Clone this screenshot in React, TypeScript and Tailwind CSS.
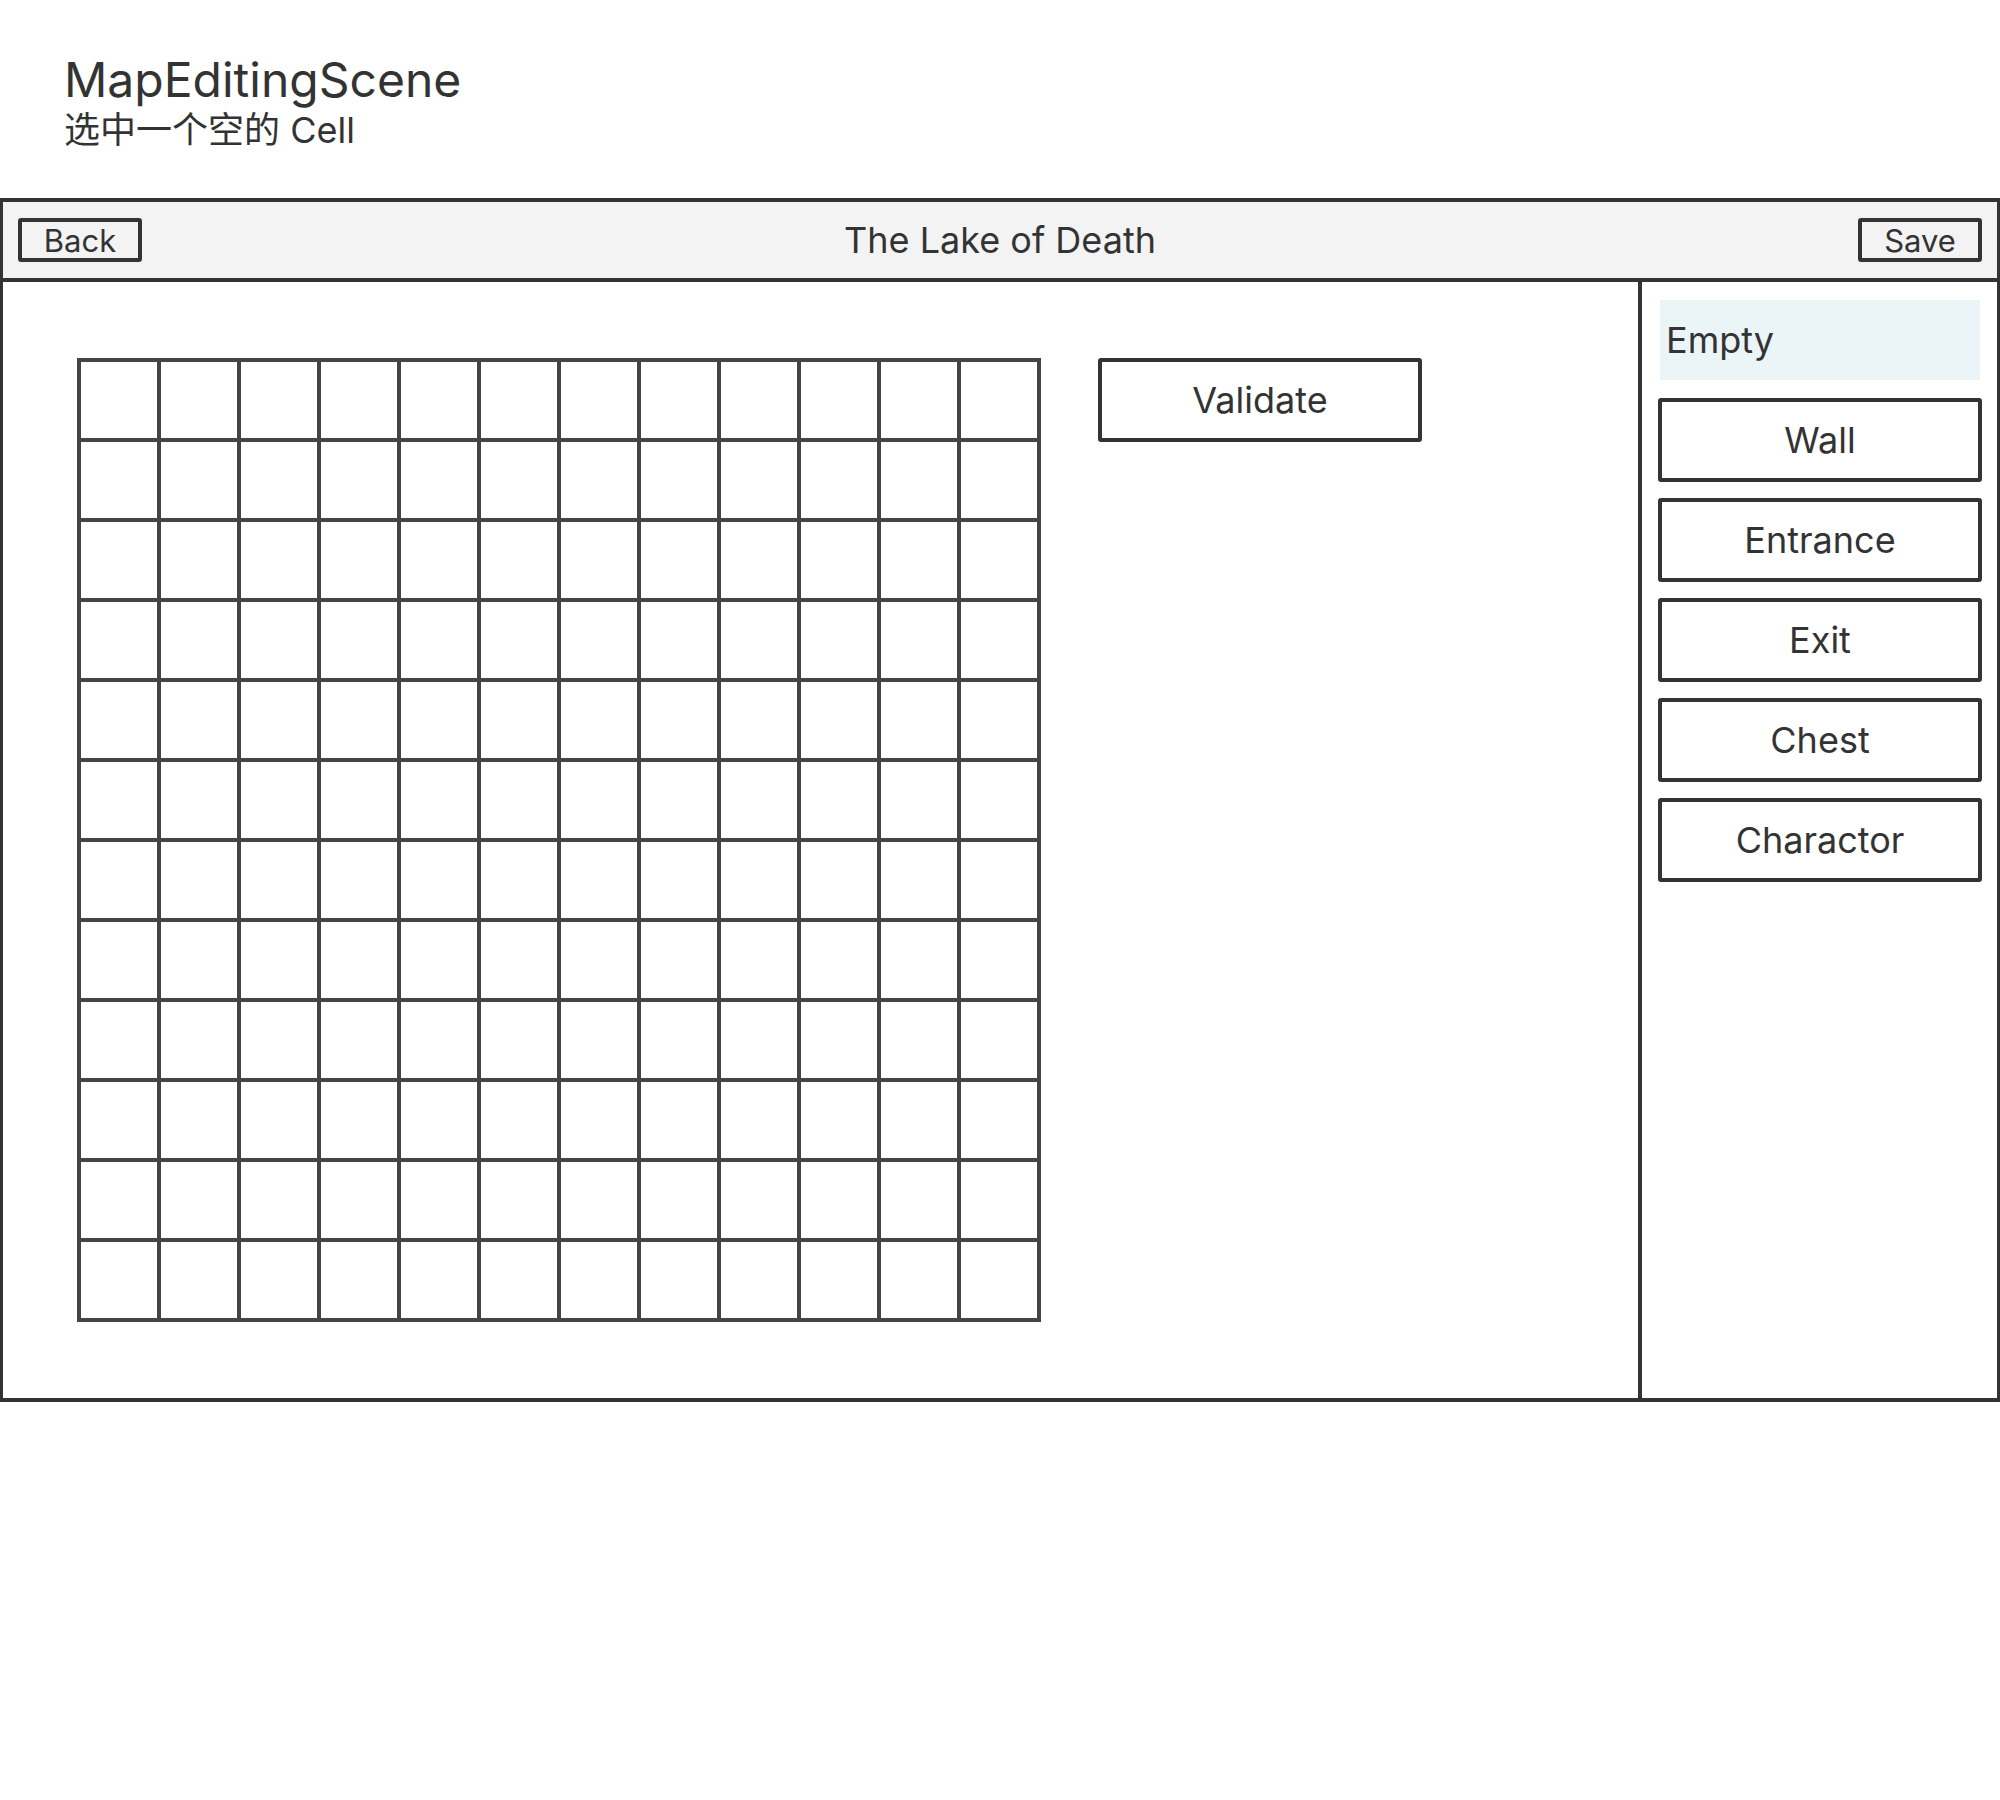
const cellTypes = ['Wall', 'Entrance', 'Exit', 'Chest', 'Charactor']

const gridCells = Array.from({ length: 144 }, (_, i) => i)

const App = () => {
  return (
    <div
      className="h-[1800px] w-[2000px] bg-white text-[#333]"
      style={ { fontFamily: 'Inter, "Noto Sans CJK SC", sans-serif' } }
    >
      <div className="h-[198px] pl-[64px] pt-[52px]">
        <h1 className="text-[48px] leading-[56px] font-normal">MapEditingScene</h1>
        <p className="text-[36px] leading-[44px]">选中一个空的 Cell</p>
      </div>

      <div className="border-x-[3px] border-y-4 border-[#333]">
        <div className="flex h-[80px] items-center justify-between border-b-4 border-[#333] bg-[#f3f3f3] px-[15px]">
          <button className="h-[44px] w-[124px] rounded-[3px] border-4 border-[#333] text-[31px] leading-none">
            Back
          </button>
          <div className="text-[36px] leading-none">The Lake of Death</div>
          <button className="h-[44px] w-[124px] rounded-[3px] border-4 border-[#333] text-[31px] leading-none">
            Save
          </button>
        </div>

        <div className="flex h-[1116px]">
          <div className="flex flex-1 items-start pl-[74px] pt-[76px]">
            <div className="grid grid-cols-[repeat(12,76px)] gap-[4px] bg-[#444] p-[4px]">
              { gridCells.map((cell) => (
                <div key={ cell } className="h-[76px] w-[76px] bg-white" />
              )) }
            </div>
            <button className="ml-[57px] h-[84px] w-[324px] rounded-[3px] border-4 border-[#333] text-[36px] leading-none">
              Validate
            </button>
          </div>

          <div className="flex w-[359px] flex-col gap-4 border-l-4 border-[#333] pl-[16px] pt-[16px]">
            <div className="flex h-[84px] w-[324px] items-center border-2 border-transparent bg-[#ebf4f7] bg-clip-padding pl-[6px] text-[36px] leading-none">
              Empty
            </div>
            { cellTypes.map((type) => (
              <button
                key={ type }
                className="h-[84px] w-[324px] rounded-[3px] border-4 border-[#333] text-[36px] leading-none"
              >
                { type }
              </button>
            )) }
          </div>
        </div>
      </div>
    </div>
  )
}

export default App
